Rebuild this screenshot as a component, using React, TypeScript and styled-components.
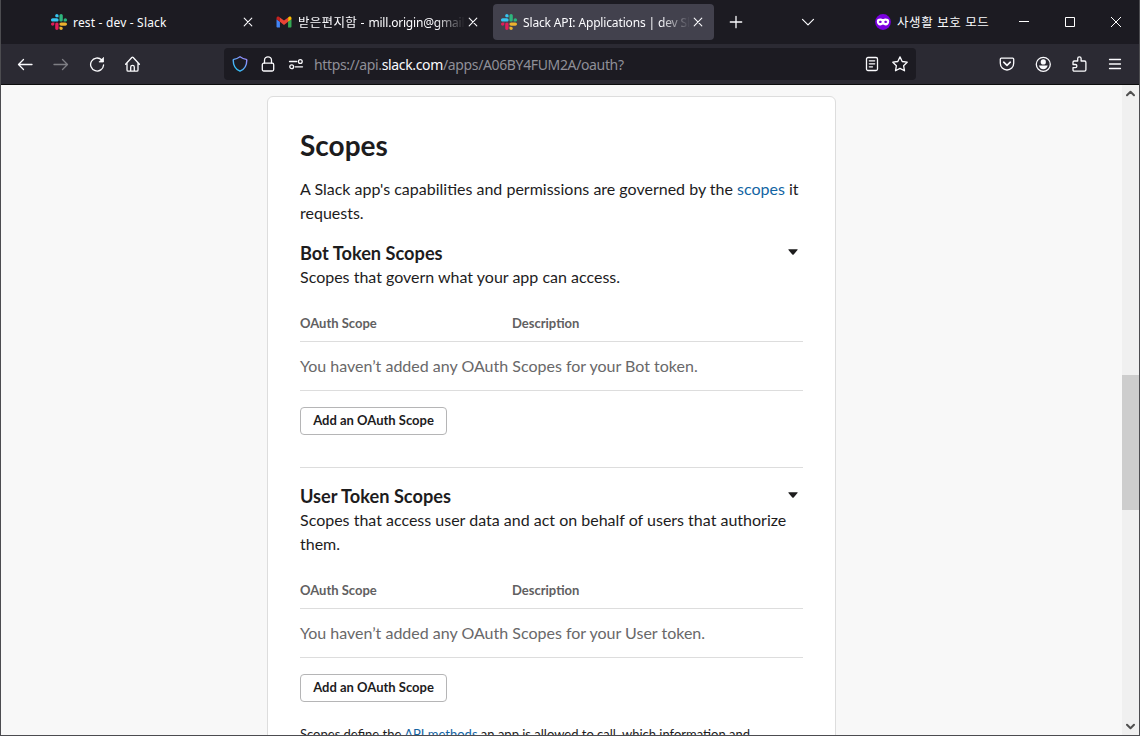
import React from "react";
import styled, { createGlobalStyle, css } from "styled-components";

const GlobalStyle = createGlobalStyle`
  * { box-sizing: border-box; }
  body { margin: 0; background: #1c1b22; overflow: hidden; }
`;

const uiFont = `"Noto Sans", "Noto Sans CJK KR", sans-serif`;

const Window = styled.div`
  display: flex;
  flex-direction: column;
  width: 1140px;
  height: 736px;
  overflow: hidden;
  border: solid #4c4c50;
  border-width: 0 1px 1px 1px;
  background: #f8f8f8;
  font-family: ${uiFont};
`;

const TabStrip = styled.div`
  display: flex;
  align-items: center;
  height: 44px;
  flex: none;
  padding-left: 42px;
  background: #1c1b22;
  color: #fbfbfe;
`;

const Tab = styled.div<{ $active?: boolean }>`
  display: flex;
  align-items: center;
  width: 221px;
  height: 36px;
  margin-right: 4px;
  padding: 0 8px;
  border-radius: 4px;
  ${(p) => p.$active && css`background: #42414d;`}
`;

const TabTitle = styled.span<{ $fade?: boolean; $spacing: number }>`
  flex: 1;
  margin-left: 6px;
  padding-top: 1px;
  height: 21px;
  line-height: 20px;
  overflow: hidden;
  white-space: nowrap;
  font-size: 12px;
  letter-spacing: ${(p) => p.$spacing}px;
  ${(p) => p.$fade && css`mask-image: linear-gradient(to left, transparent, #000 30px);`}
`;

const Korean = styled.span`
  font-size: 12.5px;
  letter-spacing: 0.3px;
`;

const IconCell = styled.span<{ $w: number; $dim?: boolean }>`
  display: flex;
  align-items: center;
  justify-content: center;
  flex: none;
  width: ${(p) => p.$w}px;
  height: 32px;
  opacity: ${(p) => (p.$dim ? 0.4 : 1)};
`;

const Spacer = styled.span`
  flex: 1;
`;

const PrivateLabel = styled.span`
  width: 104px;
  margin-left: 6px;
  font-size: 12.5px;
  line-height: 20px;
  padding-top: 1px;
  letter-spacing: 0.6px;
  white-space: nowrap;
`;

const Toolbar = styled.div`
  display: flex;
  align-items: center;
  flex: none;
  height: 41px;
  padding: 0 6px;
  background: #2b2a33;
  border-bottom: 1px solid #0c0c0d;
  color: #fbfbfe;
`;

const UrlBar = styled.div`
  display: flex;
  align-items: center;
  width: 692px;
  height: 32px;
  margin-left: 73px;
  padding: 0 2px;
  border-radius: 4px;
  background: #1c1b22;
`;

const Url = styled.span`
  flex: 1;
  margin-left: 4px;
  padding-top: 2px;
  color: #8f8f98;
  font-size: 14px;
  line-height: 20px;
  letter-spacing: -0.36px;
  white-space: nowrap;
  b { font-weight: 400; color: #fbfbfe; }
`;

const Viewport = styled.main`
  display: flex;
  flex: 1;
  min-height: 0;
  overflow: hidden;
  background: #f8f8f8;
`;

const PageArea = styled.div`
  flex: 1;
  padding: 11px 0 0 266px;
  font-family: Lato, sans-serif;
  color: #1d1c1d;
`;

const Card = styled.article`
  width: 569px;
  height: 720px;
  padding: 31px 32px;
  border: 1px solid #dddddd;
  border-radius: 6px;
  background: #fff;
`;

const Title = styled.h2`
  margin: 0 0 14px;
  font-size: 28px;
  line-height: 35px;
  font-weight: 700;
`;

const Text = styled.p`
  margin: 0;
  font-size: 16px;
  line-height: 24px;
`;

const Link = styled.a`
  color: #1264a3;
`;

const ScopeSection = styled.section<{ $divided?: boolean }>`
  padding-top: 16px;
  ${(p) => p.$divided && css`
    margin-top: 32px;
    border-top: 1px solid #dddddd;
  `}
`;

const SectionHead = styled.header`
  display: flex;
  align-items: center;
  justify-content: space-between;
  height: 24px;
  padding-right: 5px;
`;

const SectionTitle = styled.h3`
  margin: 0;
  font-size: 18.2px;
  line-height: 24px;
  font-weight: 700;
`;

const TableHead = styled.div`
  display: grid;
  grid-template-columns: 212px 1fr;
  height: 53px;
  padding-top: 24px;
  border-bottom: 1px solid #dddddd;
  color: #616061;
  font-size: 13px;
  line-height: 20px;
  font-weight: 700;
`;

const EmptyRow = styled.div`
  height: 49px;
  border-bottom: 1px solid #dddddd;
  color: #696869;
  font-size: 16px;
  line-height: 47px;
`;

const AddButton = styled.button`
  display: block;
  width: 147px;
  height: 28px;
  margin-top: 16px;
  padding: 0 0 2px;
  border: 1px solid #b5b5b6;
  border-radius: 4px;
  background: #fff;
  color: #1d1c1d;
  font: 700 13px/24px Lato, sans-serif;
`;

const Footnote = styled.p`
  margin: 20px 0 0;
  font-size: 13px;
  line-height: 24px;
`;

const Scrollbar = styled.div`
  display: flex;
  flex-direction: column;
  align-items: center;
  width: 17px;
  background: #f0f0f0;
`;

const Thumb = styled.div`
  width: 17px;
  height: 135px;
  margin: 273px 0 auto;
  background: #cdcdcd;
`;

const ScrollArrow = styled.span`
  display: flex;
  align-items: center;
  justify-content: center;
  height: 17px;
`;

const Drawing = styled.svg`
  display: block;
  flex: none;
`;

const CaretSvg = styled.svg`
  display: block;
  margin-bottom: 3px;
`;

const Svg = ({ size = 16, children, box = "0 0 16 16", w = 1.3 }: { size?: number; children: React.ReactNode; box?: string; w?: number }) => (
  <Drawing width={size} height={size} viewBox={box} fill="none" stroke="currentColor" strokeWidth={w} strokeLinecap="round" strokeLinejoin="round">
    {children}
  </Drawing>
);

const SlackLogo = () => (
  <Svg box="0 0 122.8 122.8">
    <g stroke="none">
      <path fill="#e01e5a" d="M25.8 77.6c0 7.1-5.8 12.9-12.9 12.9S0 84.7 0 77.6s5.8-12.9 12.9-12.9h12.9v12.9zm6.5 0c0-7.1 5.8-12.9 12.9-12.9s12.9 5.8 12.9 12.9v32.3c0 7.1-5.8 12.9-12.9 12.9s-12.9-5.8-12.9-12.9V77.6z" />
      <path fill="#36c5f0" d="M45.2 25.8c-7.1 0-12.9-5.8-12.9-12.9S38.1 0 45.2 0s12.9 5.8 12.9 12.9v12.9H45.2zm0 6.5c7.1 0 12.9 5.8 12.9 12.9s-5.8 12.9-12.9 12.9H12.9C5.8 58.1 0 52.3 0 45.2s5.8-12.9 12.9-12.9h32.3z" />
      <path fill="#2eb67d" d="M97 45.2c0-7.1 5.8-12.9 12.9-12.9s12.9 5.8 12.9 12.9-5.8 12.9-12.9 12.9H97V45.2zm-6.5 0c0 7.1-5.8 12.9-12.9 12.9s-12.9-5.8-12.9-12.9V12.9C64.7 5.8 70.5 0 77.6 0s12.9 5.8 12.9 12.9v32.3z" />
      <path fill="#ecb22e" d="M77.6 97c7.1 0 12.9 5.8 12.9 12.9s-5.8 12.9-12.9 12.9-12.9-5.8-12.9-12.9V97h12.9zm0-6.5c-7.1 0-12.9-5.8-12.9-12.9s5.8-12.9 12.9-12.9h32.3c7.1 0 12.9 5.8 12.9 12.9s-5.8 12.9-12.9 12.9H77.6z" />
    </g>
  </Svg>
);

const GmailLogo = () => (
  <Svg box="49 42 94 66">
    <g stroke="none">
      <path fill="#4285f4" d="M58 108h14V74L52 59v43c0 3.32 2.69 6 6 6" />
      <path fill="#34a853" d="M120 108h14c3.32 0 6-2.69 6-6V59l-20 15" />
      <path fill="#fbbc04" d="M120 48v26l20-15v-8c0-7.42-8.47-11.65-14.4-7.2" />
      <path fill="#ea4335" d="M72 74V48l24 18 24-18v26L96 92" />
      <path fill="#c5221f" d="M52 51v8l20 15V48l-5.6-4.2c-5.94-4.45-14.4-.22-14.4 7.2" />
    </g>
  </Svg>
);

const PrivateMask = () => (
  <Drawing width="16" height="16" viewBox="0 0 16 16">
    <circle cx="8" cy="8" r="7.9" fill="#7a00df" />
    <path fill="#fff" d="M1.8 7.2C1.800 5 3.600 4.400 5.200 4.400c1.200 0 1.900.6 2.800.6s1.600-.6 2.800-.6c1.600 0 3.400.6 3.400 2.800 0 2.400-1.400 4.200-3.500 4.200-1.400 0-1.900-.9-2.700-.9s-1.300.9-2.700.9c-2.100 0-3.500-1.800-3.500-4.200z" />
    <path fill="#7a00df" d="M3.700 8c.6-.9 1.100-1.200 1.700-1.200S6.500 7.100 6.900 8c-.4.700-.9 1-1.500 1S4.300 8.800 3.700 8zM12.300 8c-.6-.9-1.100-1.200-1.700-1.200S9.500 7.100 9.100 8c.4.700.9 1 1.500 1s1.100-.2 1.700-1z" />
  </Drawing>
);

const TabClose = () => (
  <IconCell $w={16}>
    <Svg size={10} box="0 0 10 10" w={1.1}><path d="M1.2 1.2l7.6 7.6M8.8 1.2L1.2 8.8" /></Svg>
  </IconCell>
);

const Caret = () => (
  <CaretSvg width="10" height="6" viewBox="0 0 10 6">
    <path d="M.8.2h8.400q.8 0 .3.700L5.700 5.500q-.7.700-1.400 0L.5.900Q0 .2.8.2z" fill="#1d1c1d" />
  </CaretSvg>
);

const ScopeTable = ({ kind }: { kind: string }) => (
  <>
    <TableHead><span>OAuth Scope</span><span>Description</span></TableHead>
    <EmptyRow>You haven’t added any OAuth Scopes for your {kind} token.</EmptyRow>
    <AddButton>Add an OAuth Scope</AddButton>
  </>
);

export default function App() {
  return (
    <>
      <GlobalStyle />
      <Window>
        <TabStrip>
          <Tab><SlackLogo /><TabTitle $spacing={0.18}>rest - dev - Slack</TabTitle><TabClose /></Tab>
          <Tab><GmailLogo /><TabTitle $fade $spacing={-0.2}><Korean>받은편지함 - </Korean>mill.origin@gmail.com</TabTitle><TabClose /></Tab>
          <Tab $active><SlackLogo /><TabTitle $fade $spacing={-0.15}>Slack API: Applications | dev Slack</TabTitle><TabClose /></Tab>
          <IconCell $w={35}><Svg size={14} box="0 0 14 14" w={1.3}><path d="M7 1.300v11.400M1.300 7h11.400" /></Svg></IconCell>
          <Spacer />
          <IconCell $w={32}><Svg size={14} box="0 0 14 14" w={1.2}><path d="M1.500 4.300L7 9.800l5.500-5.500" /></Svg></IconCell>
          <IconCell $w={51} />
          <PrivateMask />
          <PrivateLabel>사생활 보호 모드</PrivateLabel>
          <IconCell $w={46}><svg width="10" height="10"><path d="M0 4.500h10" stroke="#fff" /></svg></IconCell>
          <IconCell $w={46}><svg width="10" height="10"><path d="M.5.5h9v9h-9z" fill="none" stroke="#fff" /></svg></IconCell>
          <IconCell $w={46}><svg width="10" height="10"><path d="M0 0l10 10M10 0L0 10" stroke="#fff" /></svg></IconCell>
        </TabStrip>

        <Toolbar>
          <IconCell $w={36}><Svg><path d="M15 8.500H1.600M6.500 3.500l-5 5 5 5" /></Svg></IconCell>
          <IconCell $w={36} $dim><Svg><path d="M1 8.500h13.400M9.500 3.500l5 5-5 5" /></Svg></IconCell>
          <IconCell $w={36}><Svg><path d="M14.600 9A6.500 6.500 0 1 1 12.600 3.800" /><path d="M14.500 1.800v4.200h-4.200z" fill="currentColor" strokeWidth=".8" /></Svg></IconCell>
          <IconCell $w={36}><Svg><path d="M.6 8.200L6.800 1.500q.7-.7 1.400 0l6.200 6.700M2 7v7q0 1.200 1.200 1.200h8.600q1.200 0 1.200-1.200V7M5.700 15v-4q0-1.700 1.800-1.700t1.800 1.700v4" /></Svg></IconCell>
          <UrlBar>
            <IconCell $w={28}>
              <svg width="16" height="16" viewBox="0 0 16 16" fill="none">
                <defs><linearGradient id="shield" x1="2" y1="13" x2="12" y2="1" gradientUnits="userSpaceOnUse"><stop stopColor="#2ac3f5" /><stop offset="1" stopColor="#9a8bff" /></linearGradient></defs>
                <path d="M8 .8q3 2.200 6.200 2.600.6.100.6.700c0 5-2 9.300-6.800 11.100C3.200 13.400 1.200 9.100 1.200 4.100q0-.6.600-.7Q5 3 8 .8z" stroke="url(#shield)" strokeWidth="1.4" strokeLinejoin="round" />
              </svg>
            </IconCell>
            <IconCell $w={28}><Svg><rect x="2.300" y="7.200" width="11.400" height="7.800" rx="1.500" /><path d="M4.500 7V4.300a3.500 3.500 0 0 1 7 0V7" /></Svg></IconCell>
            <IconCell $w={28}><Svg><path d="M1.500 5.500h7.200M7.300 10.800h7.200" /><circle cx="12.300" cy="5.500" r="1.900" /><circle cx="3.700" cy="10.800" r="1.900" /></Svg></IconCell>
            <Url>https://api.<b>slack.com</b>/apps/A06BY4FUM2A/oauth?</Url>
            <IconCell $w={28}><Svg><rect x="2.500" y="1.500" width="11" height="13" rx="1.500" /><path d="M5.300 4.800h5.400M5.300 7.800h5.400M5.300 10.800h3.200" /></Svg></IconCell>
            <IconCell $w={28}><Svg><path d="M8 .9l2.200 4.600 5 .7-3.600 3.500.9 5.100L8 12.400l-4.500 2.400.9-5.100L.8 6.200l5-.7z" /></Svg></IconCell>
          </UrlBar>
          <Spacer />
          <IconCell $w={36}><Svg><path d="M2.300 2.200h11.400q1 0 1 1v4.100a6.700 6.700 0 0 1-13.400 0V3.200q0-1 1-1z" /><path d="M4.700 6.200L8 9.300l3.300-3.100" strokeWidth="1.600" /></Svg></IconCell>
          <IconCell $w={36}><Svg><circle cx="8.300" cy="8.300" r="7" /><circle cx="8.300" cy="5.900" r="2.600" fill="currentColor" stroke="none" /><path d="M3.900 9.500h8.800Q11.800 13.200 8.300 13.200T3.900 9.500z" fill="currentColor" stroke="none" /></Svg></IconCell>
          <IconCell $w={36}><Svg><path d="M3.300 5h3.400V2.500a1.700 1.700 0 0 1 3.400 0V5h3.400q1.400 0 1.400 1.400v7.400q0 1.400-1.400 1.400H3.300q-1.300 0-1.300-1.300v-2.200h2.300a1.600 1.600 0 0 0 0-3.200H2V6.300Q2 5 3.300 5z" /></Svg></IconCell>
          <IconCell $w={36}><Svg><path d="M2.500 3.500h11M2.500 8h11M2.500 12.500h11" /></Svg></IconCell>
        </Toolbar>

        <Viewport>
          <PageArea>
            <Card>
              <Title>Scopes</Title>
              <Text>A Slack app's capabilities and permissions are governed by the <Link>scopes</Link> it requests.</Text>
              <ScopeSection>
                <SectionHead><SectionTitle>Bot Token Scopes</SectionTitle><Caret /></SectionHead>
                <Text>Scopes that govern what your app can access.</Text>
                <ScopeTable kind="Bot" />
              </ScopeSection>
              <ScopeSection $divided>
                <SectionHead><SectionTitle>User Token Scopes</SectionTitle><Caret /></SectionHead>
                <Text>Scopes that access user data and act on behalf of users that authorize them.</Text>
                <ScopeTable kind="User" />
              </ScopeSection>
              <Footnote>Scopes define the <Link>API methods</Link> an app is allowed to call, which information and</Footnote>
            </Card>
          </PageArea>
          <Scrollbar>
            <ScrollArrow><Svg size={9} box="0 0 9 9" w={2}><path d="M1 6.200l3.500-3.500L8 6.200" stroke="#505050" /></Svg></ScrollArrow>
            <Thumb />
            <ScrollArrow><Svg size={9} box="0 0 9 9" w={2}><path d="M1 2.800l3.500 3.500L8 2.800" stroke="#505050" /></Svg></ScrollArrow>
          </Scrollbar>
        </Viewport>
      </Window>
    </>
  );
}
